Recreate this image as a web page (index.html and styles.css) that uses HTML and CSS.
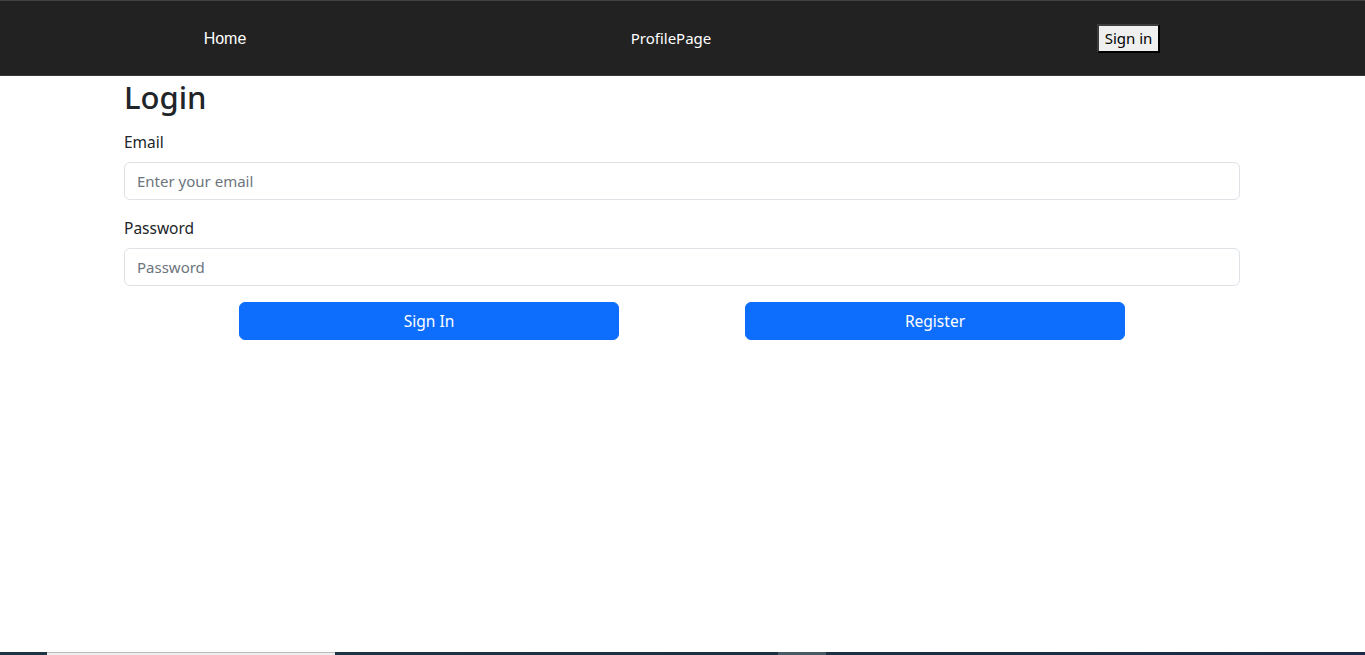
FILE: index.html
```html
<!DOCTYPE html>
<html lang="en">
<head>
<meta charset="utf-8">
<title>Login</title>
<link rel="stylesheet" href="styles.css">
</head>
<body>
<nav class="navbar">
  <div class="nav-cell"><a class="nav-link nav-home" href="#">Home</a></div>
  <div class="nav-cell"><a class="nav-link nav-profile" href="#">ProfilePage</a></div>
  <div class="nav-cell"><button class="nav-btn" type="button">Sign in</button></div>
</nav>
<main class="container">
  <h2 class="title">Login</h2>
  <form class="form">
    <div class="field">
      <label class="form-label" for="email">Email</label>
      <input class="form-control" id="email" type="email" placeholder="Enter your email">
    </div>
    <div class="field">
      <label class="form-label" for="password">Password</label>
      <input class="form-control" id="password" type="password" placeholder="Password">
    </div>
    <div class="actions">
      <button class="btn-primary" type="button">Sign In</button>
      <button class="btn-primary" type="button">Register</button>
    </div>
  </form>
</main>
<div class="taskbar">
  <span class="tb-seg tb-a"></span>
  <span class="tb-seg tb-b"></span>
  <span class="tb-seg tb-c"></span>
  <span class="tb-seg tb-d"></span>
</div>
</body>
</html>
```
FILE: styles.css
```css
* { box-sizing: border-box; }
html, body { margin: 0; padding: 0; }
body {
  font-family: "Noto Sans", "Open Sans", sans-serif;
  font-size: 16px;
  line-height: 1.5;
  color: #212529;
  background: #fff;
  height: 655px;
  overflow: hidden;
}
.navbar {
  height: 76px;
  background: #222222;
  border-top: 1px solid #444444;
  border-bottom: 1px solid #3a3a3a;
  display: grid;
  grid-template-columns: 450px 442px 1fr;
  align-items: center;
}
.nav-cell {
  display: flex;
  justify-content: center;
  align-items: center;
}
.nav-link {
  color: #ffffff;
  text-decoration: none;
  font-size: 15px;
}
.nav-profile {
  padding-top: 1px;
}
.nav-home {
  font-family: "Liberation Sans", Arial, sans-serif;
  font-size: 16px;
  padding-top: 2px;
}
.nav-btn {
  font-family: "Noto Sans", sans-serif;
  font-size: 15px;
  line-height: 20px;
  color: #000;
  background: #efefef;
  padding: 2px 6px 3px;
  border: 2px solid;
  border-color: #3c3c3c #000 #000 #3c3c3c;
  margin-top: 1px;
}
.container {
  padding: 0 125px 0 124px;
}
.title {
  font-size: 31px;
  font-weight: 500;
  line-height: 38px;
  margin: 2px 0 8px;
}
.form { padding-top: 6px; }
.field { margin-bottom: 16px; }
.form-label {
  display: block;
  font-size: 15.5px;
  line-height: 24px;
  margin-bottom: 8px;
}
.form-control {
  display: block;
  width: 100%;
  height: 38px;
  padding: 6px 12px;
  font-family: "Noto Sans", sans-serif;
  font-size: 15px;
  color: #212529;
  border: 1px solid #dee2e6;
  border-radius: 6px;
  background: #fff;
  outline: none;
}
.form-control::placeholder { color: #6c757d; opacity: 1; }
.actions {
  display: flex;
  justify-content: center;
  gap: 126px;
}
.btn-primary {
  width: 380px;
  height: 38px;
  font-family: "Noto Sans", sans-serif;
  font-size: 15.5px;
  color: #fff;
  background: #0d6efd;
  border: 1px solid #0d6efd;
  border-radius: 6px;
}
.taskbar {
  position: fixed;
  left: 0;
  right: 0;
  bottom: 0;
  height: 3px;
  display: flex;
  background: linear-gradient(90deg, #1e3440, #1e3040 60%, #1c2a48);
}
.tb-seg { display: block; height: 3px; }
.tb-a { width: 47px; }
.tb-b { width: 288px; background: #eeeeee; border-top: 1px solid #bcbcbc; }
.tb-c { width: 443px; }
.tb-d { width: 48px; background: #4a5a64; }
```
